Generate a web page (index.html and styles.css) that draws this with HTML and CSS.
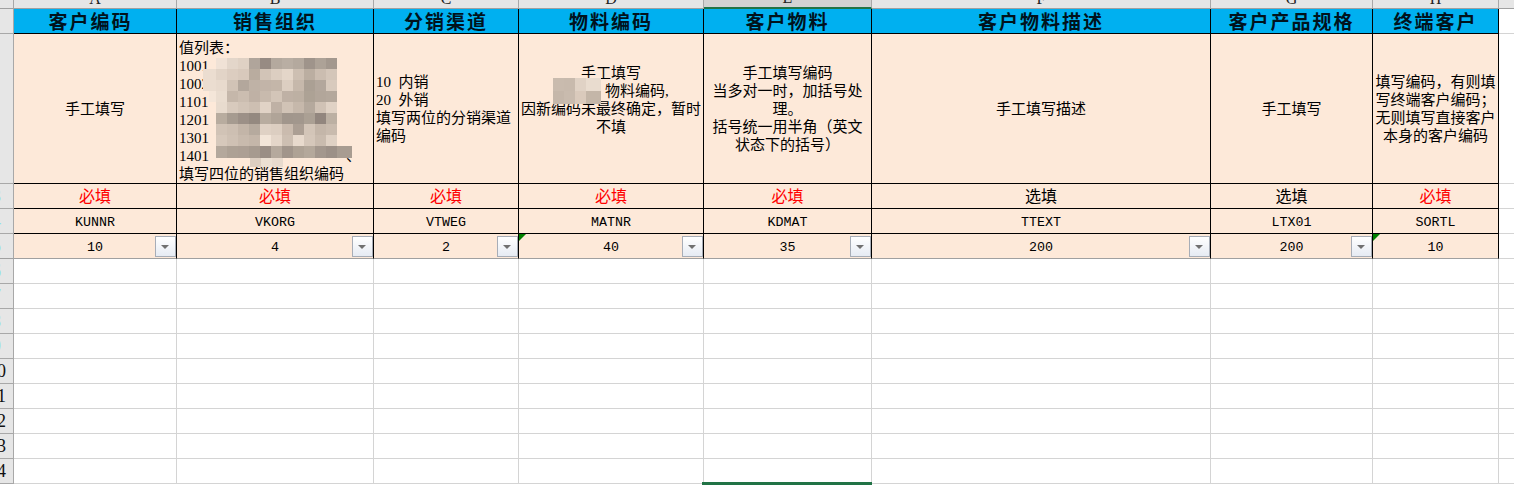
FILE: index.html
```html
<!DOCTYPE html>
<html lang="zh-CN">
<head>
<meta charset="utf-8">
<title>客户物料模板</title>
<link rel="stylesheet" href="styles.css">
</head>
<body>
<div class="sheet">
  <div class="corner"></div>
  <div class="colhead"><span>A</span></div>
  <div class="colhead"><span>B</span></div>
  <div class="colhead"><span>C</span></div>
  <div class="colhead"><span>D</span></div>
  <div class="colhead active"><span>E</span></div>
  <div class="colhead"><span>F</span></div>
  <div class="colhead"><span>G</span></div>
  <div class="colhead"><span>H</span></div>
  <div class="colhead tail"></div>

  <div class="rowhead"></div>
  <div class="cell title first">客户编码</div>
  <div class="cell title">销售组织</div>
  <div class="cell title">分销渠道</div>
  <div class="cell title">物料编码</div>
  <div class="cell title">客户物料</div>
  <div class="cell title">客户物料描述</div>
  <div class="cell title">客户产品规格</div>
  <div class="cell title">终端客户</div>
  <div class="blank"></div>

  <div class="rowhead"></div>
  <div class="cell note">手工填写</div>
  <div class="cell note left wide">
    <div>值列表：<br>1001<br>1002<br>1101<br>1201<br>1301<br>1401<span class="hidden-org"></span>、<br>填写四位的销售组织编码</div>
    <svg class="mosaic mosaic-b" width="170" height="112" viewBox="0 0 170 112" aria-hidden="true">
      <g shape-rendering="crispEdges">
        <rect x="33" y="0" width="11" height="11" fill="#f0e2d6"/><rect x="44" y="0" width="11" height="11" fill="#e3d6ca"/><rect x="55" y="0" width="11" height="11" fill="#dfd1c4"/><rect x="66" y="0" width="11" height="11" fill="#b0a59b"/><rect x="77" y="0" width="11" height="11" fill="#978b83"/><rect x="88" y="0" width="11" height="11" fill="#b4a99e"/><rect x="99" y="0" width="11" height="11" fill="#b9aea3"/><rect x="110" y="0" width="11" height="11" fill="#b4a99e"/><rect x="121" y="0" width="11" height="11" fill="#9f948b"/><rect x="132" y="0" width="11" height="11" fill="#ada297"/><rect x="143" y="0" width="11" height="11" fill="#a3988e"/>
        <rect x="20" y="11" width="13" height="11" fill="#ebddd0"/><rect x="33" y="11" width="11" height="11" fill="#e2d4c7"/><rect x="44" y="11" width="11" height="11" fill="#dccdc0"/><rect x="55" y="11" width="11" height="11" fill="#d8c9bc"/><rect x="66" y="11" width="11" height="11" fill="#b9ac9f"/><rect x="77" y="11" width="11" height="11" fill="#d2c4b7"/><rect x="88" y="11" width="11" height="11" fill="#dccec1"/><rect x="99" y="11" width="11" height="11" fill="#e4d6c9"/><rect x="110" y="11" width="11" height="11" fill="#cdbfb2"/><rect x="121" y="11" width="11" height="11" fill="#bbaea1"/><rect x="132" y="11" width="11" height="11" fill="#cbbdb0"/><rect x="143" y="11" width="11" height="11" fill="#d4c6b9"/>
        <rect x="20" y="22" width="13" height="11" fill="#ebddd0"/><rect x="33" y="22" width="11" height="11" fill="#e8dacd"/><rect x="44" y="22" width="11" height="11" fill="#d1c3b6"/><rect x="55" y="22" width="11" height="11" fill="#b3a79c"/><rect x="66" y="22" width="11" height="11" fill="#bfb2a6"/><rect x="77" y="22" width="11" height="11" fill="#c2b4a8"/><rect x="88" y="22" width="11" height="11" fill="#c4b6a9"/><rect x="99" y="22" width="11" height="11" fill="#dccec1"/><rect x="110" y="22" width="11" height="11" fill="#c6b8ab"/><rect x="121" y="22" width="11" height="11" fill="#aba094"/><rect x="132" y="22" width="11" height="11" fill="#b3a79c"/><rect x="143" y="22" width="11" height="11" fill="#d8cabd"/>
        <rect x="26" y="33" width="7" height="11" fill="#f4e6d9"/><rect x="33" y="33" width="11" height="11" fill="#eaddd0"/><rect x="44" y="33" width="11" height="11" fill="#c5b7aa"/><rect x="55" y="33" width="11" height="11" fill="#cbbdb0"/><rect x="66" y="33" width="11" height="11" fill="#bfb1a5"/><rect x="77" y="33" width="11" height="11" fill="#c8baad"/><rect x="88" y="33" width="11" height="11" fill="#d3c5b8"/><rect x="99" y="33" width="11" height="11" fill="#bfb1a5"/><rect x="110" y="33" width="11" height="11" fill="#bdb0a3"/><rect x="121" y="33" width="11" height="11" fill="#ada295"/><rect x="132" y="33" width="11" height="11" fill="#b2a69a"/><rect x="143" y="33" width="11" height="11" fill="#b4a89c"/>
        <rect x="33" y="44" width="11" height="11" fill="#e8dbce"/><rect x="44" y="44" width="11" height="11" fill="#d8cabd"/><rect x="55" y="44" width="11" height="11" fill="#d2c4b7"/><rect x="66" y="44" width="11" height="11" fill="#cdbfb2"/><rect x="77" y="44" width="11" height="11" fill="#e1d3c6"/><rect x="88" y="44" width="11" height="11" fill="#bfb1a5"/><rect x="99" y="44" width="11" height="11" fill="#d1c3b6"/><rect x="110" y="44" width="11" height="11" fill="#c6b8ab"/><rect x="121" y="44" width="11" height="11" fill="#b5a99d"/><rect x="132" y="44" width="11" height="11" fill="#d0c2b5"/><rect x="143" y="44" width="11" height="11" fill="#e0d2c5"/>
        <rect x="33" y="55" width="11" height="11" fill="#b8ac9f"/><rect x="44" y="55" width="11" height="11" fill="#a69b90"/><rect x="55" y="55" width="11" height="11" fill="#9c9087"/><rect x="66" y="55" width="11" height="11" fill="#948980"/><rect x="77" y="55" width="11" height="11" fill="#b8ac9f"/><rect x="88" y="55" width="11" height="11" fill="#b0a498"/><rect x="99" y="55" width="11" height="11" fill="#a1968c"/><rect x="110" y="55" width="11" height="11" fill="#a2978d"/><rect x="121" y="55" width="11" height="11" fill="#aba094"/><rect x="132" y="55" width="11" height="11" fill="#92867e"/><rect x="143" y="55" width="11" height="11" fill="#bcb0a3"/>
        <rect x="33" y="66" width="11" height="11" fill="#d1c3b6"/><rect x="44" y="66" width="11" height="11" fill="#cdbfb2"/><rect x="55" y="66" width="11" height="11" fill="#c3b5a8"/><rect x="66" y="66" width="11" height="11" fill="#b6aa9e"/><rect x="77" y="66" width="11" height="11" fill="#dfd1c4"/><rect x="88" y="66" width="11" height="11" fill="#dccec1"/><rect x="99" y="66" width="11" height="11" fill="#cabbae"/><rect x="110" y="66" width="11" height="11" fill="#ac9f94"/><rect x="121" y="66" width="11" height="11" fill="#d3c5b8"/><rect x="132" y="66" width="11" height="11" fill="#c4b6a9"/><rect x="143" y="66" width="11" height="11" fill="#c9bbae"/>
        <rect x="33" y="77" width="11" height="11" fill="#d6c8bb"/><rect x="44" y="77" width="11" height="11" fill="#cfc1b4"/><rect x="55" y="77" width="11" height="11" fill="#c8baad"/><rect x="66" y="77" width="11" height="11" fill="#c4b6a9"/><rect x="77" y="77" width="11" height="11" fill="#f2e5d8"/><rect x="88" y="77" width="11" height="11" fill="#e4d6c9"/><rect x="99" y="77" width="11" height="11" fill="#cdbfb2"/><rect x="110" y="77" width="11" height="11" fill="#e8dacd"/><rect x="121" y="77" width="11" height="11" fill="#d5c7ba"/><rect x="132" y="77" width="11" height="11" fill="#c9bbae"/><rect x="143" y="77" width="11" height="11" fill="#dfd1c4"/>
        <rect x="33" y="88" width="11" height="12" fill="#b4a89c"/><rect x="44" y="88" width="11" height="12" fill="#ada195"/><rect x="55" y="88" width="11" height="12" fill="#ac9f94"/><rect x="66" y="88" width="11" height="12" fill="#a69a8f"/><rect x="77" y="88" width="11" height="12" fill="#9a8e85"/><rect x="88" y="88" width="11" height="12" fill="#b5a99d"/><rect x="99" y="88" width="11" height="12" fill="#a1958b"/><rect x="110" y="88" width="11" height="12" fill="#aea295"/><rect x="121" y="88" width="11" height="12" fill="#b4a89b"/><rect x="132" y="88" width="11" height="12" fill="#a3978d"/><rect x="143" y="88" width="11" height="12" fill="#9c9087"/><rect x="154" y="88" width="15" height="12" fill="#a89c91"/>
        <rect x="67" y="100" width="11" height="9" fill="#dccec1"/><rect x="78" y="100" width="11" height="9" fill="#ece0d3"/><rect x="89" y="100" width="11" height="9" fill="#e8dacd"/>
      </g>
    </svg>
  </div>
  <div class="cell note left">10&nbsp;&nbsp;内销<br>20&nbsp;&nbsp;外销<br>填写两位的分销渠道编码</div>
  <div class="cell note">
    <div>手工填写<br><span class="hidden-name"></span>物料编码,<br>因新编码未最终确定，暂时不填<br>&nbsp;</div>
    <svg class="mosaic mosaic-d" width="48" height="26" viewBox="0 0 48 26" aria-hidden="true">
      <g shape-rendering="crispEdges">
        <rect x="0" y="0" width="11" height="13" fill="#c9bbae"/><rect x="11" y="0" width="11" height="13" fill="#c8baad"/><rect x="22" y="0" width="11" height="13" fill="#e0d2c5"/><rect x="33" y="0" width="15" height="13" fill="#e9dccf"/>
        <rect x="0" y="13" width="11" height="13" fill="#c5b7aa"/><rect x="11" y="13" width="11" height="13" fill="#c9bbae"/><rect x="22" y="13" width="11" height="13" fill="#dacabc"/><rect x="33" y="13" width="15" height="13" fill="#c4b6a8"/>
      </g>
    </svg>
  </div>
  <div class="cell note inset">手工填写编码<br>当多对一时，加括号处理。<br>括号统一用半角（英文状态下的括号）</div>
  <div class="cell note">手工填写描述</div>
  <div class="cell note">手工填写</div>
  <div class="cell note">填写编码，有则填写终端客户编码；无则填写直接客户本身的客户编码</div>
  <div class="blank"></div>

  <div class="rowhead faint">3</div>
  <div class="cell req">必填</div>
  <div class="cell req">必填</div>
  <div class="cell req">必填</div>
  <div class="cell req">必填</div>
  <div class="cell req">必填</div>
  <div class="cell opt">选填</div>
  <div class="cell opt">选填</div>
  <div class="cell req">必填</div>
  <div class="blank"></div>

  <div class="rowhead faint">4</div>
  <div class="cell code">KUNNR</div>
  <div class="cell code">VKORG</div>
  <div class="cell code">VTWEG</div>
  <div class="cell code">MATNR</div>
  <div class="cell code">KDMAT</div>
  <div class="cell code">TTEXT</div>
  <div class="cell code">LTX01</div>
  <div class="cell code">SORTL</div>
  <div class="blank"></div>

  <div class="rowhead faint lastrow">5</div>
  <div class="cell code len lastrow">10<i class="drop"></i></div>
  <div class="cell code len lastrow">4<i class="drop"></i></div>
  <div class="cell code len lastrow">2<i class="drop"></i></div>
  <div class="cell code len lastrow"><i class="flag"></i>40<i class="drop"></i></div>
  <div class="cell code len lastrow">35<i class="drop"></i></div>
  <div class="cell code len lastrow">200<i class="drop"></i></div>
  <div class="cell code len lastrow">200<i class="drop"></i></div>
  <div class="cell code len lastrow"><i class="flag"></i>10</div>
  <div class="blank"></div>

  <div class="rowhead faint">6</div><div class="empty"></div><div class="empty"></div><div class="empty"></div><div class="empty"></div><div class="empty"></div><div class="empty"></div><div class="empty"></div><div class="empty"></div><div class="blank"></div>
  <div class="rowhead faint">7</div><div class="empty"></div><div class="empty"></div><div class="empty"></div><div class="empty"></div><div class="empty"></div><div class="empty"></div><div class="empty"></div><div class="empty"></div><div class="blank"></div>
  <div class="rowhead faint">8</div><div class="empty"></div><div class="empty"></div><div class="empty"></div><div class="empty"></div><div class="empty"></div><div class="empty"></div><div class="empty"></div><div class="empty"></div><div class="blank"></div>
  <div class="rowhead faint">9</div><div class="empty"></div><div class="empty"></div><div class="empty"></div><div class="empty"></div><div class="empty"></div><div class="empty"></div><div class="empty"></div><div class="empty"></div><div class="blank"></div>
  <div class="rowhead num">10</div><div class="empty"></div><div class="empty"></div><div class="empty"></div><div class="empty"></div><div class="empty"></div><div class="empty"></div><div class="empty"></div><div class="empty"></div><div class="blank"></div>
  <div class="rowhead num">11</div><div class="empty"></div><div class="empty"></div><div class="empty"></div><div class="empty"></div><div class="empty"></div><div class="empty"></div><div class="empty"></div><div class="empty"></div><div class="blank"></div>
  <div class="rowhead num">12</div><div class="empty"></div><div class="empty"></div><div class="empty"></div><div class="empty"></div><div class="empty"></div><div class="empty"></div><div class="empty"></div><div class="empty"></div><div class="blank"></div>
  <div class="rowhead num">13</div><div class="empty"></div><div class="empty"></div><div class="empty"></div><div class="empty"></div><div class="empty"></div><div class="empty"></div><div class="empty"></div><div class="empty"></div><div class="blank"></div>
  <div class="rowhead num">14</div><div class="empty"></div><div class="empty"></div><div class="empty"></div><div class="empty"></div><div class="empty selected"></div><div class="empty"></div><div class="empty"></div><div class="empty"></div><div class="blank"></div>
</div>
</body>
</html>
```

FILE: styles.css
```css
* { box-sizing: border-box; }
html, body { margin: 0; padding: 0; background: #fff; overflow: hidden; }
body { width: 1514px; height: 485px; }

.sheet {
  display: grid;
  grid-template-columns: 14px 163px 197px 145px 185px 168px 339px 162px 126px 1fr;
  grid-template-rows: 9px 25px 150px 25px 25px 25px repeat(9, 25px) 2px;
  width: 1514px;
  height: 485px;
  font-family: "Liberation Serif", "Noto Sans CJK SC", serif;
  color: #000;
  overflow: hidden;
}

.corner,
.colhead {
  background: #e6e6e6;
  border-right: 1px solid #a8a8a8;
  border-bottom: 1px solid #a0a0a0;
}
.colhead {
  display: flex;
  justify-content: center;
  align-items: flex-end;
  overflow: hidden;
  font-size: 16px;
  line-height: 20px;
  color: #222;
}
.colhead span { display: block; margin-bottom: -1px; }
.colhead.active { background: #d2d2d2; border-bottom: 2px solid #217346; }
.colhead.tail { border-right: 0; }

.rowhead {
  background: #e6e6e6;
  border-right: 1px solid #a8a8a8;
  border-bottom: 1px solid #a8a8a8;
  overflow: hidden;
  display: flex;
  justify-content: flex-end;
  align-items: center;
  font-size: 18px;
  line-height: 24px;
  padding-right: 7px;
  white-space: nowrap;
  color: #111;
}
.rowhead.faint { padding-right: 12px; color: #8fe3ef; }
.rowhead.lastrow { border-bottom-color: #a0a0a0; }

.cell {
  position: relative;
  display: flex;
  align-items: center;
  justify-content: center;
  text-align: center;
  background: #fde9d9;
  border-right: 1px solid #000;
  border-bottom: 1px solid #000;
  min-width: 0;
}
.title {
  background: #00b0f0;
  font-family: "Noto Sans CJK SC", sans-serif;
  font-size: 19px;
  font-weight: 700;
  letter-spacing: 2px;
  color: #00131d;
  padding-bottom: 2px;
}
.title.first { padding-right: 9px; }
.note {
  font-family: "Liberation Serif", "Noto Sans CJK SC", serif;
  font-size: 15px;
  line-height: 18px;
  padding: 0 1px;
}
.note.left { justify-content: flex-start; text-align: left; padding-left: 2px; padding-right: 4px; }
.note.left.wide { align-items: flex-end; }
.note.inset { padding: 0 7px; }
.req, .opt {
  font-family: "Noto Sans CJK SC", sans-serif;
  font-size: 16px;
  padding-bottom: 2px;
}
.req { color: #ff0000; }
.opt { color: #000; }
.code {
  font-family: "Liberation Mono", "Noto Sans CJK SC", monospace;
  font-size: 13.33px;
  padding-top: 2px;
}
.cell.lastrow { border-bottom-color: #a0a0a0; }

.drop {
  position: absolute;
  right: 0;
  top: 2px;
  width: 21px;
  height: 21px;
  border: 1px solid #a7adb7;
  background: linear-gradient(#ffffff, #e6ebf3);
}
.drop::after {
  content: "";
  position: absolute;
  left: 5px;
  top: 8px;
  width: 0;
  height: 0;
  border-left: 4px solid transparent;
  border-right: 4px solid transparent;
  border-top: 4px solid #707070;
}
.flag {
  position: absolute;
  left: 0;
  top: 0;
  width: 0;
  height: 0;
  border-top: 7px solid #008000;
  border-right: 7px solid transparent;
}

.mosaic { position: absolute; display: block; }
.mosaic-b { left: 6px; top: 24px; }
.mosaic-d { left: 34px; top: 44px; }
.hidden-name { display: inline-block; width: 52px; height: 1px; }
.hidden-org { display: inline-block; width: 137px; height: 1px; }

.blank {
  background: #fff;
  border-bottom: 1px solid #d4d4d4;
}
.empty {
  background: #fff;
  border-right: 1px solid #d4d4d4;
  border-bottom: 1px solid #d4d4d4;
  position: relative;
}
.empty.selected::after {
  content: "";
  position: absolute;
  left: -2px;
  right: -1px;
  bottom: -2px;
  height: 3px;
  background: #217346;
}
```
